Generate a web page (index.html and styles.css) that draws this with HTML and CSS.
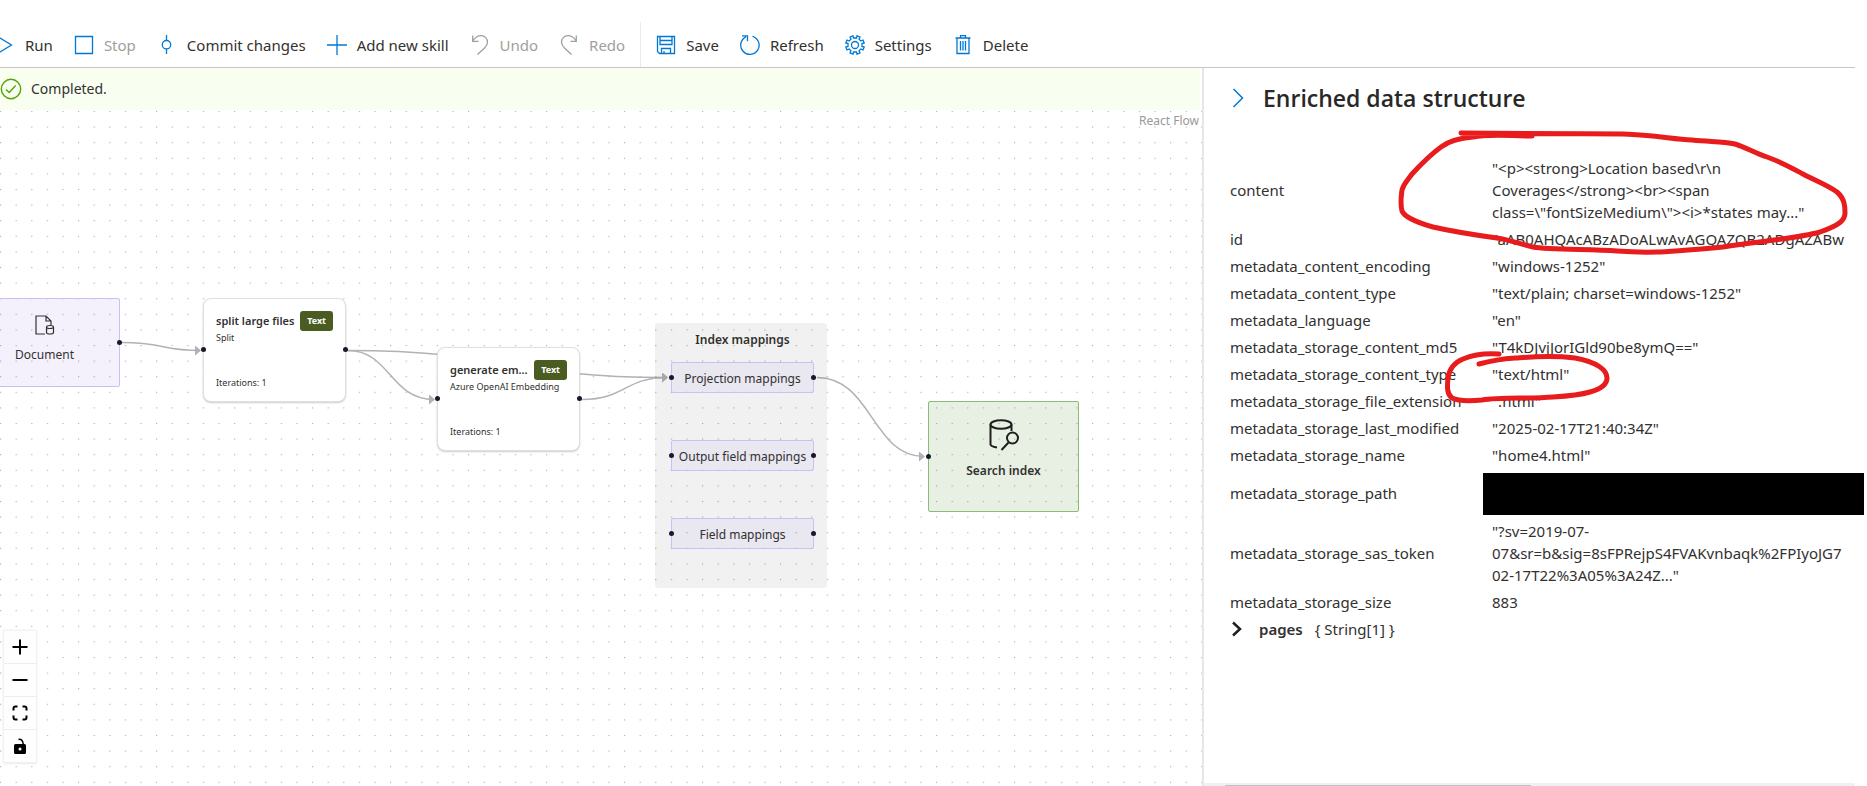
FILE: index.html
```html
<!DOCTYPE html>
<html lang="en">
<head>
<meta charset="utf-8">
<title>Debug session</title>
<link rel="stylesheet" href="styles.css">
</head>
<body>
<div class="app">
  <header class="toolbar" role="toolbar" aria-label="Session commands">
    <button class="cmd cmd-run"><svg class="ico" viewBox="0 0 20 20"><path d="M4 2.500 16.500 10 4 17.500Z"/></svg>Run</button>
    <button class="cmd cmd-stop" disabled><svg class="ico ico-live" viewBox="0 0 20 20"><path d="M1.500 1.500h17v17h-17z"/></svg>Stop</button>
    <button class="cmd cmd-commit"><svg class="ico" viewBox="0 0 20 20"><path d="M9.500 0v5.500M9.500 14v5"/><circle cx="9.500" cy="9.700" r="4.200"/></svg>Commit changes</button>
    <button class="cmd cmd-add"><svg class="ico" viewBox="0 0 20 20"><path d="M0 10h20M10 0v20"/></svg>Add new skill</button>
    <button class="cmd cmd-undo" disabled><svg class="ico" viewBox="0 0 20 20"><path d="M2.700.5v5.800h5.800M2.700 6C5 2.500 8 .7 11 .7c4 0 6.500 3 6.500 6.500 0 2.500-1 3.800-3 5.800L7.500 19.500"/></svg>Undo</button>
    <button class="cmd cmd-redo" disabled><svg class="ico" viewBox="0 0 20 20"><path d="M17.300.5v5.800h-5.800M17.300 6C15 2.500 12 .7 9 .7 5 .7 2.500 3.700 2.500 7.200c0 2.500 1 3.800 3 5.800l7 6.500"/></svg>Redo</button>
    <span class="divider"></span>
    <button class="cmd cmd-save"><svg class="ico" viewBox="0 0 20 20"><path d="M1.500 1.500h17v17H3.500l-2-2zM4 1.500v8h12v-8M4 5.500h12M5.500 18.500v-5h9v5M8 18.500v-2.500"/></svg>Save</button>
    <button class="cmd cmd-refresh"><svg class="ico" viewBox="0 0 20 20"><path d="M12.500 1.300a9.200 9.200 0 1 1-6.500.5M2 .8h5.500v5.500"/></svg>Refresh</button>
    <button class="cmd cmd-settings"><svg class="ico" viewBox="0 0 20 20"><circle cx="10" cy="10" r="3.500"/><path d="M8.500 3 8 .8 5 2l1 2.200L4.200 6 2 5 .8 8 3 8.500v3L.8 12 2 15l2.200-1L6 15.800 5 18l3 1.200.5-2.200h3l.5 2.200 3-1.200-1-2.200 1.800-1.800 2.200 1 1.200-3-2.200-.5v-3l2.200-.5L18 5l-2.200 1L14 4.200 15 2 12 .8 11.500 3z"/></svg>Settings</button>
    <button class="cmd cmd-delete"><svg class="ico" viewBox="0 0 20 20"><path d="M2.500 3h15M7.500 3V.7h5V3M4 3v15.500h12V3M7.500 6v9.500M10 6v9.500M12.500 6v9.500"/></svg>Delete</button>
  </header>

  <main class="workspace">
    <section class="canvas">
      <div class="status" role="status">
        <svg class="status-ico" viewBox="0 0 22 22"><circle cx="11" cy="11" r="9.700"/><path d="m6 11.500 3.200 3 6.500-7"/></svg>
        Completed.
      </div>
      <div class="flow">
        <svg class="flow-bg" aria-hidden="true">
          <defs>
            <pattern id="dots" width="15.600" height="15.600" patternUnits="userSpaceOnUse"><circle cx=".7" cy="1.500" r=".6"/></pattern>
            <marker id="arrow" markerWidth="7" markerHeight="10" refX="5" refY="5" orient="auto" markerUnits="userSpaceOnUse"><path class="arrowhead" d="M0 0 6 5 0 10Z"/></marker>
          </defs>
          <rect width="100%" height="100%" fill="url(#dots)"/>
          <g class="edges" transform="translate(0 -110)">
            <path d="M122 342.500C163 342.500 163 350.500 200 350.500"/>
            <path d="M348 350.500C390 350.500 390 399.500 434 399.500"/>
            <path d="M348 350.500C508 350.500 508 377.500 667 377.500"/>
            <path d="M582 399.500C625 399.500 625 377.500 667 377.500"/>
            <path d="M817 377.500C872 377.500 872 456.500 924 456.500"/>
          </g>
        </svg>

        <span class="attribution">React Flow</span>

        <div class="node document">
          <svg class="document-ico" viewBox="0 0 20 20"><path d="M10 19H1V1h10l5 5v4M11 1v5h5"/><ellipse cx="15" cy="12" rx="3.500" ry="1.500"/><path d="M11.500 12v5.500c0 2 7 2 7 0V12"/></svg>
          Document
          <i class="port out"></i>
        </div>

        <div class="node skill split">
          <div class="skill-head"><strong>split large files</strong><span class="tag">Text</span></div>
          <div class="skill-kind">Split</div>
          <div class="skill-iter">Iterations: 1</div>
          <i class="port in"></i><i class="port out"></i>
        </div>

        <div class="node skill embed">
          <div class="skill-head"><strong>generate em...</strong><span class="tag">Text</span></div>
          <div class="skill-kind">Azure OpenAI Embedding</div>
          <div class="skill-iter">Iterations: 1</div>
          <i class="port in"></i><i class="port out"></i>
        </div>

        <div class="node mappings">
          <strong class="mappings-title">Index mappings</strong>
          <div class="mapping">Projection mappings<i class="port in"></i><i class="port out"></i></div>
          <div class="mapping">Output field mappings<i class="port in"></i><i class="port out"></i></div>
          <div class="mapping">Field mappings<i class="port in"></i><i class="port out"></i></div>
        </div>

        <div class="node search">
          <svg class="search-ico" viewBox="0 0 30 32"><ellipse cx="12" cy="5.500" rx="10.500" ry="4.300"/><path d="M1.500 5.500v20c0 1.300 2.800 2.300 6.500 3M22.500 5.500v6.500M19.500 23.500 12.500 31"/><circle cx="23.500" cy="19" r="5.500"/></svg>
          <strong>Search index</strong>
          <i class="port in"></i>
        </div>

        <div class="controls">
          <button class="ctl" aria-label="Zoom in"><svg viewBox="0 0 16 16"><path d="M.5 8h15M8 .5v15"/></svg></button>
          <button class="ctl" aria-label="Zoom out"><svg viewBox="0 0 16 16"><path d="M.5 8h15"/></svg></button>
          <button class="ctl" aria-label="Fit view"><svg viewBox="0 0 16 16"><path d="M1.500 5.500v-2q0-2 2-2h2M10.500 1.500h2q2 0 2 2v2M14.500 10.500v2q0 2-2 2h-2M5.500 14.500h-2q-2 0-2-2v-2"/></svg></button>
          <button class="ctl" aria-label="Toggle interactivity"><svg viewBox="0 0 16 16"><path class="lock" fill-rule="evenodd" d="M3.500 6h9q1.500 0 1.500 1.500v7q0 1.500-1.500 1.500h-9Q2 16 2 14.500v-7Q2 6 3.500 6ZM8 9.500a1.500 1.500 0 1 0 0 3 1.500 1.500 0 0 0 0-3Z"/><path class="shackle" d="M6.500 1.500Q10.500.5 11.200 6"/></svg></button>
        </div>
      </div>
    </section>

    <aside class="panel">
      <div class="panel-scroll">
        <div class="panel-head">
          <button class="collapse" aria-label="Collapse panel"><svg viewBox="0 0 12 20"><path d="m1.500 1 9 9-9 9"/></svg></button>
          <h2>Enriched data structure</h2>
        </div>
        <table class="props">
          <tr><th scope="row">content</th><td>"&lt;p&gt;&lt;strong&gt;Location based\r\n<br>Coverages&lt;/strong&gt;&lt;br&gt;&lt;span<br>class=\"fontSizeMedium\"&gt;&lt;i&gt;*states may..."</td></tr>
          <tr><th scope="row">id</th><td>"aAB0AHQAcABzADoALwAvAGQAZQB2ADgAZABw</td></tr>
          <tr><th scope="row">metadata_content_encoding</th><td>"windows-1252"</td></tr>
          <tr><th scope="row">metadata_content_type</th><td>"text/plain; charset=windows-1252"</td></tr>
          <tr><th scope="row">metadata_language</th><td>"en"</td></tr>
          <tr><th scope="row">metadata_storage_content_md5</th><td>"T4kDJvjJorIGld90be8ymQ=="</td></tr>
          <tr><th scope="row">metadata_storage_content_type</th><td>"text/html"</td></tr>
          <tr><th scope="row">metadata_storage_file_extension</th><td>".html"</td></tr>
          <tr><th scope="row">metadata_storage_last_modified</th><td>"2025-02-17T21:40:34Z"</td></tr>
          <tr><th scope="row">metadata_storage_name</th><td>"home4.html"</td></tr>
          <tr class="tall"><th scope="row">metadata_storage_path</th><td></td></tr>
          <tr><th scope="row">metadata_storage_sas_token</th><td>"?sv=2019-07-<br>07&amp;sr=b&amp;sig=8sFPRejpS4FVAKvnbaqk%2FPIyoJG7<br>02-17T22%3A05%3A24Z..."</td></tr>
          <tr><th scope="row">metadata_storage_size</th><td>883</td></tr>
        </table>
        <button class="pages" aria-expanded="false"><svg viewBox="0 0 12 16"><path d="m2 1.500 7 6.500-7 6.500"/></svg><strong>pages</strong><span>{ String[1] }</span></button>
      </div>
      <div class="scrollbar"><span class="thumb"></span></div>
      <svg class="markup" viewBox="1202 68 665 718" aria-hidden="true">
        <rect x="1483" y="473" width="381" height="42"/>
        <path d="M1461 133C1520 133 1570 134 1623 134C1655 135 1672 139 1692 140C1712 142 1722 141 1735 144C1745 147 1755 153 1767 157C1781 162 1790 167 1803 174C1816 181 1827 185 1837 192C1845 199 1845 207 1845 213C1845 220 1840 225 1820 232C1795 239 1760 241 1723 247C1690 250 1665 252 1657 252C1640 252.500 1630 252 1617 251C1590 249 1550 250 1533 247C1520 244 1510 240 1497 238C1475 235 1455 232 1433 227C1415 222 1404 216 1402 211C1400 203 1401 198 1402 190C1404 183 1407 181 1412 174C1424 161 1430 155 1441 147C1450 140 1460 138 1473 137C1490 133.500 1510 136 1532 136"/>
        <path d="M1499 354C1485 353 1475 354 1463 359C1453 363 1449 371 1448 378C1447 388 1447 394 1452 398C1460 402 1472 401 1482 400C1500 397 1530 399 1553 397C1570 396 1580 395 1590 392C1601 389 1607 384 1607 378C1607 370 1597 362 1575 358C1550 355 1530 357 1515 358C1500 359 1490 361 1479 364"/>
      </svg>
    </aside>
  </main>
</div>
</body>
</html>
```
FILE: styles.css
```css
* { box-sizing: border-box; }
body {
  margin: 0;
  background: #fff;
  color: #323130;
  font: 15px/22px "Noto Sans", "Open Sans", sans-serif;
}
button { border: 0; padding: 0; background: none; color: inherit; font: inherit; }
svg { display: block; fill: none; }
.app { height: 100vh; display: flex; flex-direction: column; overflow: hidden; }

.toolbar {
  display: flex;
  align-items: stretch;
  gap: 21px;
  height: 68px;
  padding-top: 22px;
  margin-right: 12px;
  border-bottom: 1px solid #c8c6c4;
}
.cmd { display: flex; align-items: center; gap: 10px; white-space: nowrap; }
.cmd:disabled { color: #a19f9d; }
.ico { width: 20px; height: 20px; stroke: #0078d4; stroke-width: 1.3; }
.cmd:disabled .ico { stroke: #a19f9d; }
.cmd:disabled .ico-live { stroke: #0078d4; }
.cmd-run .ico { margin-left: -5px; }
.divider { width: 1px; background: #edebe9; margin: 0 -6px; }

.workspace { flex: 1; min-height: 0; display: flex; margin-right: 12px; }
.canvas { flex: 1; min-width: 0; display: flex; flex-direction: column; }
.status {
  display: flex;
  align-items: center;
  gap: 9px;
  height: 42px;
  margin-right: 2px;
  background: #f8fff0;
  font-size: 14px;
}
.status-ico { width: 22px; height: 22px; stroke: #57a300; stroke-width: 1.4; }

.flow { position: relative; flex: 1; overflow: hidden; font-size: 12px; }
.flow-bg { width: 100%; height: 100%; }
.flow-bg pattern circle { fill: #91919a; }
.edges > path { stroke: #b1b1b7; stroke-width: 1.500; marker-end: url(#arrow); }
.arrowhead { fill: #b1b1b7; }
.attribution { position: absolute; top: 0; right: 3px; color: #999; font-size: 12px; }

.node { position: absolute; display: flex; flex-direction: column; }
.port {
  position: absolute;
  top: 50%;
  width: 5px;
  height: 5px;
  margin-top: -3px;
  border-radius: 50%;
  background: #1a192b;
}
.port.in { left: -3px; }
.port.out { right: -3px; }

.document {
  left: -31px;
  top: 188px;
  width: 151px;
  height: 89px;
  padding-top: 16px;
  align-items: center;
  gap: 9px;
  border: 1px solid #cdbff5;
  border-radius: 2px;
  background: rgba(100, 50, 230, .07);
}
.document-ico { width: 20px; height: 20px; stroke: #323130; stroke-width: 1.2; }

.skill {
  width: 143px;
  height: 104px;
  padding: 13px 12px;
  border: 1px solid #e1dfdd;
  border-radius: 8px;
  background: #fff;
  box-shadow: 0 1px 2px rgba(0, 0, 0, .2);
  font-size: 9px;
  line-height: 16px;
  white-space: nowrap;
}
.split { left: 203px; top: 188px; }
.embed { left: 437px; top: 237px; }
.skill-head { display: flex; justify-content: space-between; align-items: center; height: 18px; }
.skill-head strong { font-size: 11px; font-weight: 600; }
.tag {
  padding: 2px 7px;
  border-radius: 3px;
  background: #4b5c23;
  color: #fff;
  font-weight: 700;
}
.skill-iter { margin-top: auto; margin-bottom: -3px; }

.mappings {
  left: 655px;
  top: 213px;
  width: 172px;
  height: 265px;
  padding: 6px 13px 0 16px;
  border-radius: 3px;
  background: rgba(0, 0, 0, .055);
}
.mappings-title { align-self: center; margin-bottom: 11px; font-weight: 600; }
.mapping {
  position: relative;
  height: 31px;
  margin-bottom: 47px;
  border: 1px solid #cdbff5;
  border-radius: 2px;
  background: rgba(100, 50, 230, .05);
  line-height: 31px;
  text-align: center;
  white-space: nowrap;
}
.search {
  left: 928px;
  top: 291px;
  width: 151px;
  height: 111px;
  padding-top: 17px;
  align-items: center;
  gap: 9px;
  border: 1px solid #8bbb76;
  border-radius: 2px;
  background: rgba(60, 130, 25, .12);
}
.search strong { font-weight: 600; }
.search-ico { width: 30px; height: 32px; stroke: #201f1e; stroke-width: 2; }

.controls {
  position: absolute;
  left: 4px;
  bottom: 23px;
  display: flex;
  flex-direction: column;
  box-shadow: 0 0 2px 1px rgba(0, 0, 0, .08);
}
.ctl {
  display: flex;
  align-items: center;
  justify-content: center;
  width: 32px;
  height: 33px;
  border-bottom: 1px solid #eee;
  background: #fefefe;
}
.ctl svg { width: 16px; height: 16px; stroke: #000; stroke-width: 2; }
.ctl .lock { fill: #000; stroke: none; }
.ctl .shackle { stroke-width: 1.500; }

.panel {
  position: relative;
  flex: 0 0 653px;
  display: flex;
  flex-direction: column;
  border-left: 2px solid #e6e6e6;
}
.panel-scroll { flex: 1; min-height: 0; overflow: hidden; padding: 14px 0 0 26px; }
.panel-head { display: flex; align-items: center; gap: 19px; height: 32px; }
.collapse svg { width: 12px; height: 20px; margin-left: 2px; stroke: #0078d4; stroke-width: 1.500; }
h2 { margin: 0; font-size: 23px; line-height: 32px; font-weight: 600; color: #292827; font-family: "Open Sans", "Noto Sans", sans-serif; }
.props { margin-top: 43px; border-collapse: collapse; }
.props th { min-width: 262px; padding: 0 0 5px; font-weight: 400; text-align: left; }
.props td { padding: 0 0 5px; white-space: nowrap; }
.tall { height: 49px; }
.pages { display: flex; align-items: center; gap: 12px; }
.pages svg { width: 12px; height: 16px; margin: 0 4px 0 1px; stroke: #201f1e; stroke-width: 2.5; }
.pages strong { font-weight: 600; }
.scrollbar { height: 3px; padding-top: 2px; background: #f0f0f0; }
.thumb { display: block; width: 306px; height: 1px; margin-left: 21px; background: #c1c1c1; }

.markup { position: absolute; left: -2px; top: 0; width: 665px; height: 718px; pointer-events: none; }
.markup rect { fill: #000; }
.markup path { stroke: #e81c1c; stroke-width: 5; stroke-linecap: round; stroke-linejoin: round; }
```
